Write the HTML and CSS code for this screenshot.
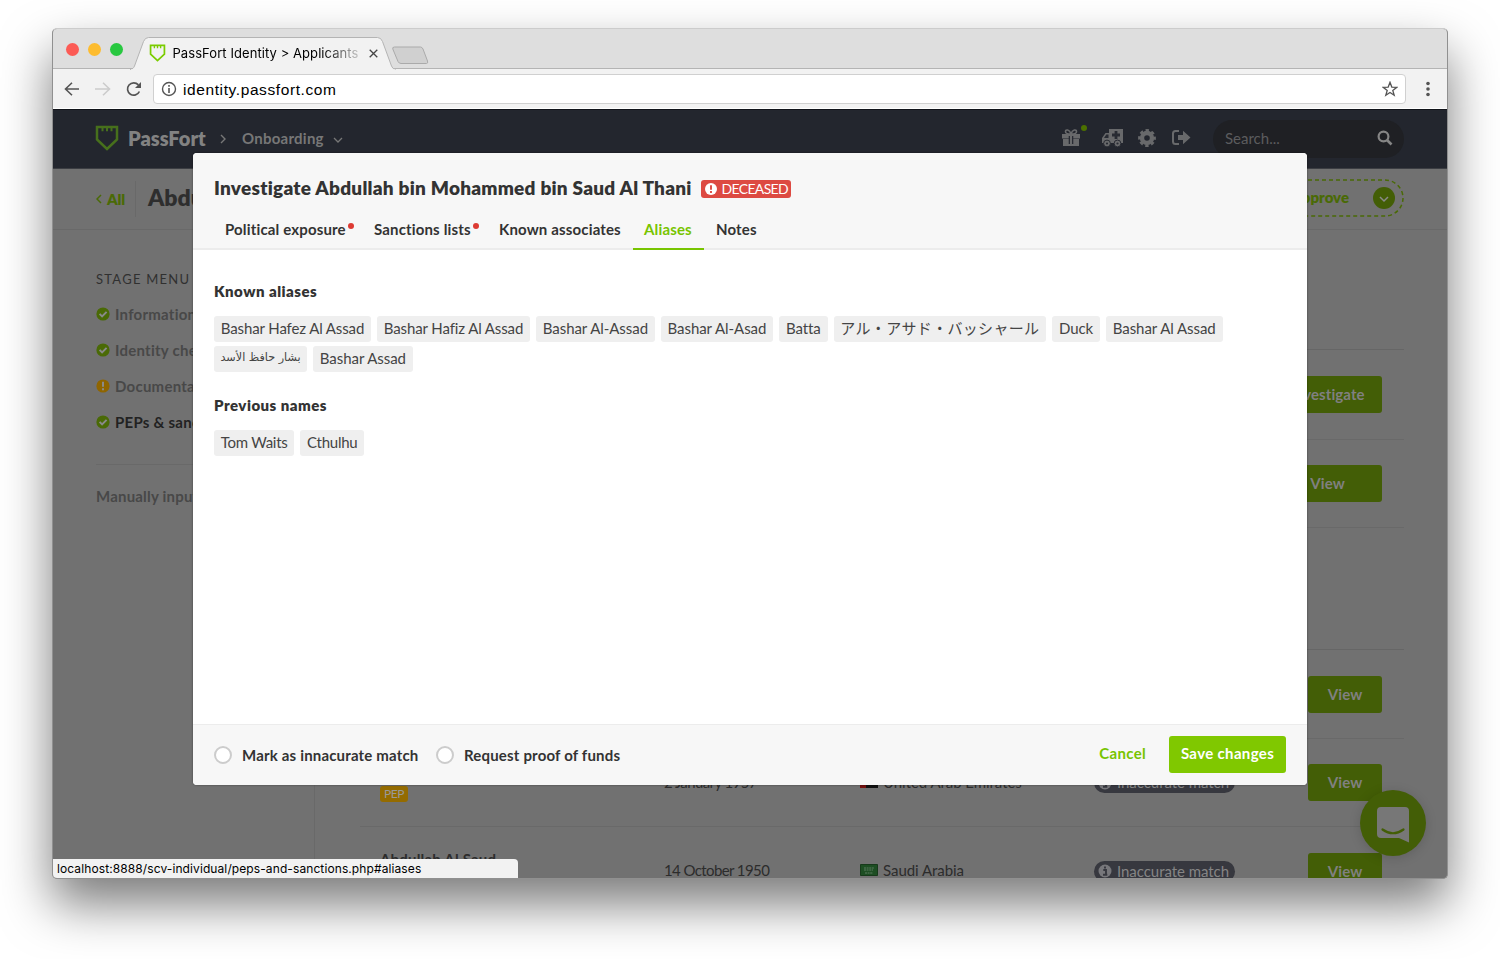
FILE: index.html
```html
<!DOCTYPE html>
<html lang="en">
<head>
<meta charset="utf-8">
<title>PassFort Identity &gt; Applicants</title>
<link rel="stylesheet" href="styles.css">
</head>
<body>
<svg class="defs" width="0" height="0" aria-hidden="true">
  <symbol id="shield" viewBox="0 0 24 26"><path d="M2 2v12.500L12 24l10-9.500V2H2Z" fill="none" stroke="currentColor" stroke-width="2.500"/><path d="M7.500 2v4.200M12 2v4.200M16.500 2v4.200" stroke="currentColor" stroke-width="2"/></symbol>
  <symbol id="check" viewBox="0 0 14 14"><circle cx="7" cy="7" r="6.600" fill="#4a6a06"/><path d="m3.600 6.900 2.500 2.500 4.500-4.500" fill="none" stroke="#8a8a8a" stroke-width="2"/></symbol>
  <symbol id="info" viewBox="0 0 14 14"><circle cx="7" cy="7" r="6.500" fill="#77777b"/><path d="M7 2.500v2M5.300 6H8v4.500M5 10.700h4.300" fill="none" stroke="#37383f" stroke-width="1.900"/></symbol>
</svg>
<div class="window">
  <header class="tabstrip">
    <i class="light red"></i><i class="light amber"></i><i class="light green"></i>
    <div class="tab">
      <svg class="tab-shape" width="266" height="33" viewBox="0 0 266 33"><path d="M0 32.500C3 32 3.500 31 4.500 29L13.500 4.500q1.500-4 5-4h229q3.500 0 5 4l9 24.500q1 3 4 3.500" fill="#f2f2f2" stroke="#b4b4b4"/><path d="M1 33h264" stroke="#f2f2f2" stroke-width="1.500"/></svg>
      <svg class="tab-icon" width="17" height="18"><use href="#shield"/></svg>
      <span class="tab-title">PassFort Identity &gt; Applicants</span>
      <svg class="tab-close" width="9" height="9"><path d="m.7.7 7.600 7.600M8.300.7.7 8.300" stroke="#444" stroke-width="1.300"/></svg>
    </div>
    <svg class="newtab" width="38" height="19"><path d="M3.500 1h26q1.500 0 2.500 2l4.500 12q.8 2.500-1 2.500H10q-2 0-3-2L1.800 3Q1.200 1 3.500 1Z" fill="#d0d0d0" stroke="#aaa"/></svg>
  </header>
  <div class="toolbar">
    <svg width="16" height="14"><path d="M15 7H1.500M8 .7 1.500 7 8 13.300" fill="none" stroke="#555" stroke-width="1.600"/></svg>
    <svg width="16" height="14"><path d="M0 7h13.500M8 .7 14.500 7 8 13.300" fill="none" stroke="#ccc" stroke-width="1.600"/></svg>
    <svg width="16" height="16"><path d="M13.400 10.500a6.200 6.200 0 1 1-1-6.600" fill="none" stroke="#555" stroke-width="1.700"/><path d="M15 1v6H9Z" fill="#555"/></svg>
    <div class="address">
      <svg width="16" height="16"><circle cx="8" cy="8" r="6.500" fill="none" stroke="#555" stroke-width="1.400"/><path d="M8 4v1.700M8 7v5" stroke="#555" stroke-width="1.600"/></svg>
      <span class="url">identity.passfort.com</span>
      <svg class="star" width="16" height="16"><path d="m8 1.300 1.800 4.800 5 .2-4 3.100 1.400 4.900L8 11.500l-4.200 2.800 1.400-4.900-4-3.100 5-.2Z" fill="none" stroke="#555" stroke-width="1.300"/></svg>
    </div>
    <svg class="dots" width="4" height="16" fill="#555"><circle cx="2" cy="2.500" r="1.800"/><circle cx="2" cy="8" r="1.800"/><circle cx="2" cy="13.500" r="1.800"/></svg>
  </div>
  <nav class="nav">
    <svg class="brand-icon" width="24" height="26"><use href="#shield"/></svg>
    <span class="brand">PassFort</span>
    <svg class="crumb" width="6" height="10"><path d="m1 1 4 4-4 4" fill="none" stroke="#777" stroke-width="1.400"/></svg>
    <span class="section">Onboarding</span>
    <svg width="10" height="7"><path d="m1 1 4 4 4-4" fill="none" stroke="#777" stroke-width="1.300"/></svg>
    <div class="nav-icons">
      <span class="gift"><svg width="18" height="17" fill="#68696b"><path d="M0 5h18v4.500H0ZM1 10h16v7H1Z"/><path d="M9 5C6 5 3.500 4.500 3.500 2.700 3.500 0 7.500.3 9 5 10.500.3 14.500 0 14.500 2.700 14.500 4.500 12 5 9 5Z" fill="none" stroke="#68696b" stroke-width="1.600"/><path d="M6.700 7h4.600V15H6.700Z" fill="#282b33"/><path d="M8 6h2v9H8Z"/></svg><i></i></span>
      <svg width="21" height="18" fill="#68696b"><path d="M7 0h14v14H0V9l3.500-5H7Z"/><circle cx="5" cy="14.500" r="3.400" stroke="#282b33"/><circle cx="15.500" cy="14.500" r="3.400" stroke="#282b33"/><path d="M2 9h4.500V5.500H4.300ZM12.600 2h2.800v2.600H18v2.800h-2.600V10h-2.800V7.400H10V4.600h2.600Z" fill="#282b33"/><circle cx="5" cy="14.500" r="1.100" fill="#282b33"/><circle cx="15.500" cy="14.500" r="1.100" fill="#282b33"/></svg>
      <svg width="18" height="18"><circle cx="9" cy="9" r="5" fill="none" stroke="#68696b" stroke-width="4.400"/><circle cx="9" cy="9" r="7.700" fill="none" stroke="#68696b" stroke-width="2.400" stroke-dasharray="3.400 2.647" stroke-dashoffset="1.700"/></svg>
      <svg width="19" height="15"><path d="M7 1H3.500Q1 1 1 3.500v8Q1 14 3.500 14H7" fill="none" stroke="#68696b" stroke-width="2"/><path d="M6 5h5V.8l7.500 6.700-7.500 6.700V10H6Z" fill="#68696b"/></svg>
    </div>
    <div class="search"><span>Search...</span><svg width="16" height="16"><circle cx="6.500" cy="6.500" r="4.900" fill="none" stroke="#858585" stroke-width="2.200"/><path d="m10 10 4.500 4.500" stroke="#858585" stroke-width="2.600"/></svg></div>
  </nav>
  <div class="subheader">
    <svg width="6" height="10"><path d="M5 1 1 5l4 4" fill="none" stroke="#4a6a06" stroke-width="1.500"/></svg>
    <span class="all">All</span>
    <h1>Abdullah</h1>
    <div class="approve"><svg class="approve-line" width="150" height="38"><rect x="1" y="1" width="148" height="36" rx="18" fill="none" stroke="#4a6a06" stroke-width="1.500" stroke-dasharray="4 3"/></svg><span>Approve</span><svg width="22" height="22"><circle cx="11" cy="11" r="11" fill="#435e06"/><path d="m7 10 4 4 4-4" fill="none" stroke="#8a8a8a" stroke-width="1.500"/></svg></div>
  </div>
  <div class="content">
    <aside>
      <h2>STAGE MENU</h2>
      <ul>
        <li><svg width="14" height="14"><use href="#check"/></svg>Information</li>
        <li><svg width="14" height="14"><use href="#check"/></svg>Identity checks</li>
        <li><svg width="14" height="14"><circle cx="7" cy="7" r="6.600" fill="#8f6500"/><path d="M7 2.700v5M7 9.200v2" stroke="#8a8a8a" stroke-width="2"/></svg>Documentation</li>
        <li class="current"><svg width="14" height="14"><use href="#check"/></svg>PEPs &amp; sanctions</li>
      </ul>
      <p>Manually input</p>
    </aside>
    <main>
      <section class="table first">
        <div class="row"><span class="btn wide">Investigate</span></div>
        <div class="row"><span class="btn wide">View</span></div>
      </section>
      <section class="table">
        <div class="row"><span class="btn">View</span></div>
        <div class="row">
          <div class="who"><b>Abdullah</b><em>PEP</em></div>
          <span class="date">2 January 1957</span>
          <span class="country"><svg width="18" height="12"><path d="M0 0h18v4H0Z" fill="#174a22"/><path d="M0 4h18v4H0Z" fill="#858585"/><path d="M0 8h18v4H0Z" fill="#111"/><path d="M0 0h6v12H0Z" fill="#74100e"/></svg>United Arab Emirates</span>
          <span class="status"><svg width="14" height="14"><use href="#info"/></svg>Inaccurate match</span>
          <span class="btn">View</span>
        </div>
        <div class="row">
          <div class="who raised"><b>Abdullah Al Saud</b></div>
          <span class="date">14 October 1950</span>
          <span class="country"><svg width="18" height="12"><path d="M.5.5h17v11H.5Z" fill="#1d4e23" stroke="#173a1b"/><path d="M4 4h10M4 6h9M5 9h8" stroke="#5d7b60" stroke-width="1.200" stroke-dasharray="2 .6"/></svg>Saudi Arabia</span>
          <span class="status"><svg width="14" height="14"><use href="#info"/></svg>Inaccurate match</span>
          <span class="btn">View</span>
        </div>
      </section>
    </main>
  </div>
  <div class="chat"><svg width="32" height="36"><path d="M4 0h24q4 0 4 4v31.500L22 31H4q-4 0-4-4V4q0-4 4-4Z" fill="#777"/><path d="M5.500 22.500q10.500 7.500 21 0" fill="none" stroke="#435e06" stroke-width="2.200" stroke-linecap="round"/></svg></div>
  <div class="statusbar">localhost:8888/scv-individual/peps-and-sanctions.php#aliases</div>
  <div class="modal">
    <div class="modal-head">
      <div class="title"><h3>Investigate Abdullah bin Mohammed bin Saud Al Thani</h3><span class="deceased"><svg width="12" height="12"><circle cx="6" cy="6" r="6" fill="#fff"/><path d="M6 2.300v4.500M6 8v1.900" stroke="#dd4a42" stroke-width="1.900"/></svg><span>DECEASED</span></span></div>
      <div class="tabs"><a class="alert t1">Political exposure</a><a class="alert t2">Sanctions lists</a><a class="t3">Known associates</a><a class="active">Aliases</a><a>Notes</a></div>
    </div>
    <div class="modal-body">
      <h4>Known aliases</h4>
      <div class="chips known"><span>Bashar Hafez Al Assad</span><span>Bashar Hafiz Al Assad</span><span>Bashar Al-Assad</span><span>Bashar Al-Asad</span><span>Batta</span><span class="ja" lang="ja">アル・アサド・バッシャール</span><span>Duck</span><span>Bashar Al Assad</span><span class="ar" lang="ar" dir="rtl">بشار حافظ الأسد</span><span>Bashar Assad</span></div>
      <h4>Previous names</h4>
      <div class="chips previous"><span>Tom Waits</span><span>Cthulhu</span></div>
    </div>
    <div class="modal-foot">
      <i class="radio"></i><label class="mark">Mark as innacurate match</label>
      <i class="radio"></i><label class="proof">Request proof of funds</label>
      <span class="cancel">Cancel</span><span class="save">Save changes</span>
    </div>
  </div>
</div>
</body>
</html>
```
FILE: styles.css
```css
* { box-sizing: border-box; }
body { margin: 0; width: 1500px; height: 959px; overflow: hidden; padding: 28px 0 0 52px; background: #fff; font-family: Lato, "Noto Sans CJK JP", sans-serif; font-size: 15px; }
svg { display: block; flex: none; }
.defs { position: absolute; }
h1, h2, h3, h4, p, ul { margin: 0; padding: 0; list-style: none; }
.window { position: relative; display: flex; flex-direction: column; width: 1396px; height: 851px; overflow: hidden; border: 1px solid #909090; border-top-color: #ccc; border-radius: 5px; background: #717171; box-shadow: 0 25px 50px rgba(0,0,0,.52); }

.tabstrip { display: flex; height: 40px; flex: none; background: #dedede; border-bottom: 1px solid #b4b4b4; }
.light { width: 13px; height: 13px; border-radius: 50%; margin: 14px 9px 0 0; }
.light.red { background: #fc5b55; margin-left: 12.5px; }
.light.amber { background: #fdbc2f; }
.light.green { background: #28c840; margin-right: 8px; }
.tab { position: relative; display: flex; align-items: center; width: 266px; height: 33px; margin: 7px 0 0 -.5px; padding-left: 18.500px; flex: none; }
.tab-shape { position: absolute; left: 0; top: 1px; }
.tab-icon { position: relative; color: #7bcc00; }
.tab-title { position: relative; margin: 1px 9px 0 7px; width: 187px; font: 13px Inter, sans-serif; letter-spacing: .07px; white-space: nowrap; overflow: hidden; color: transparent; background: linear-gradient(90deg, #000 80%, #ccc 100%); background-clip: text; -webkit-background-clip: text; }
.tab-close { position: relative; top: 1px; }
.newtab { margin: 17px 0 0 -5px; }

.toolbar { display: flex; align-items: center; height: 40px; flex: none; padding: 0 17px 0 11px; background: #f2f2f2; border-bottom: 1px solid #fff; }
.toolbar > svg + svg { margin-left: 15px; }
.address { display: flex; align-items: center; flex: 1; height: 30px; margin: 0 20px 0 11px; padding: 0 7px; border: 1px solid #d0d0d0; border-radius: 4px; background: #fff; }
.url { margin: 2px 0 0 6px; flex: 1; font: 15.5px "Liberation Sans", sans-serif; letter-spacing: .6px; color: #000; }

.nav { display: flex; align-items: center; height: 60px; flex: none; padding: 0 0 2px 42px; background: #23262e; border-top: 1px solid #101319; border-bottom: 1px solid #3c3e43; color: #777; }
.brand-icon { color: #47701c; }
.brand { width: 79px; margin: -1px 0 0 9px; font-size: 20px; font-weight: 800; color: #828282; }
.crumb { margin: 2px 16px 0 13px; }
.section { width: 82px; margin-right: 9px; font-weight: 700; letter-spacing: .25px; white-space: nowrap; }
.section + svg { margin-top: 4px; }
.nav-icons { display: flex; align-items: center; gap: 15px; margin: -1px 0 0 auto; }
.gift { position: relative; margin-right: 7px; }
.gift i { position: absolute; left: 19px; top: -4px; width: 6px; height: 6px; border-radius: 50%; background: #4c7100; }
.nav-icons > svg:nth-child(3) { margin-right: 1px; }
.search { display: flex; align-items: center; justify-content: space-between; width: 191px; height: 38px; margin: 1px 43px 0 22px; padding: 0 11px 1px 12px; border-radius: 19px; background: #1f2024; color: #5c5c5e; }

.subheader { display: flex; align-items: center; height: 61px; flex: none; padding: 0 43px; border-bottom: 1px solid #696969; }
.all { margin: 0 10px 0 5px; font-weight: 800; color: #4a6a06; letter-spacing: -.2px; }
h1 { padding-left: 12px; border-left: 1px solid #696969; height: 36px; line-height: 33px; font-size: 23px; font-weight: 800; color: #2e2e2e; }
.approve { position: relative; display: flex; align-items: center; justify-content: flex-end; width: 150px; height: 38px; margin: -2px 0 0 auto; padding-right: 9px; gap: 24px; color: #4a6a06; font-weight: 800; }
.approve span { margin-top: -2px; }
.approve-line { position: absolute; left: 0; top: 0; }

.content { display: flex; flex: 1; min-height: 0; }
aside { width: 262px; padding: 40px 0 0 43px; border-right: 1px solid #696969; flex: none; color: #484848; font-weight: 700; white-space: nowrap; }
h2 { height: 18px; font-size: 13px; font-weight: 400; line-height: 18px; letter-spacing: 1.250px; color: #303030; }
aside ul { padding: 8px 0 24px; border-bottom: 1px solid #696969; }
li { display: flex; align-items: center; gap: 5px; height: 36px; letter-spacing: .25px; }
.current { color: #222; }
aside p { margin-top: 22px; letter-spacing: .2px; }
main { width: 1089px; padding: 119px 0 0 45px; flex: none; }
.table { border-top: 1px solid #666; }
.table.first { margin-bottom: 121px; }
.row { display: flex; align-items: center; height: 89px; padding: 0 22px 0 20px; border-bottom: 1px solid #696969; color: #2c2c2c; white-space: nowrap; }
.row:nth-child(2) { height: 88px; }
.first .row:first-child { height: 90px; padding-bottom: 1px; }
.btn { width: 74px; height: 37px; margin-left: auto; border-radius: 3px; background: #435e06; color: #808080; font-weight: 700; line-height: 36px; text-align: center; letter-spacing: .1px; }
.btn.wide { width: 109px; }
.who { display: flex; flex-direction: column; align-items: flex-start; gap: 5px; width: 284px; letter-spacing: .2px; }
.raised { padding-bottom: 25px; }
em { padding: 0 4px; border-radius: 3px; background: #946b00; color: #999; font: 12px/16px Lato, sans-serif; letter-spacing: -.4px; }
.date { width: 196px; letter-spacing: -.6px; }
.country { display: flex; align-items: center; gap: 5px; width: 234px; letter-spacing: -.05px; }
.date, .country { margin-top: -2px; }
.status { display: flex; align-items: center; gap: 5px; width: 141px; height: 21px; padding-left: 4px; border-radius: 11px; background: #37383f; color: #858585; letter-spacing: -.05px; line-height: 19px; }
.chat { position: absolute; left: 1307px; top: 761px; display: flex; justify-content: center; padding-top: 17px; width: 66px; height: 66px; border-radius: 50%; background: #435e06; box-shadow: 0 2px 12px rgba(0,0,0,.15); }
.statusbar { position: absolute; left: 0; bottom: 0; width: 465px; height: 19px; padding-left: 4px; border-radius: 0 4px 0 0; background: #f2f2f2; font: 12px/19px Inter, sans-serif; letter-spacing: .1px; color: #000; }

.modal { position: absolute; left: 140px; top: 124px; display: flex; flex-direction: column; width: 1114px; height: 632px; border-radius: 4px; overflow: hidden; background: #fff; color: #333; box-shadow: 0 0 2px rgba(0,0,0,.5); }
.modal-head { height: 97px; padding: 24px 21px 0; background: #f7f7f7; border-bottom: 2px solid #ececec; flex: none; }
.title { display: flex; align-items: center; height: 23px; }
h3 { width: 486.5px; font-size: 19px; font-weight: 800; white-space: nowrap; letter-spacing: .24px; line-height: 22px; margin-top: -1px; }
.deceased { display: flex; align-items: center; width: 90px; height: 18px; padding-left: 4px; gap: 5px; border-radius: 3px; background: #dd4a42; color: #fff; font-size: 14px; letter-spacing: -.65px; line-height: 17px; }
.tabs { display: grid; grid-template-columns: 149px 125px 145px 71px 64px; grid-template-rows: 50px; height: 50px; font-weight: 700; line-height: 59px; letter-spacing: .15px; white-space: nowrap; }
.tabs a { padding-left: 11px; }
.tabs .active { color: #78c400; border-bottom: 2px solid #78c400; }
.tabs a:last-child { padding-left: 12px; }
.alert::after { content: ""; display: inline-block; width: 6px; height: 6px; margin-left: 2px; border-radius: 50%; background: #dd3b33; vertical-align: 6px; }
.modal-body { flex: 1; padding: 31px 21px; }
h4 { font-size: 15px; font-weight: 800; line-height: 20px; height: 20px; letter-spacing: .48px; }
.chips { display: flex; flex-wrap: wrap; gap: 4px 6px; margin: 15px 0 23px; }
.chips span { height: 26px; padding: 0 6.800px; border-radius: 3px; background: #efefef; line-height: 24px; letter-spacing: -.12px; color: #444; white-space: nowrap; }
.known span:nth-child(n+3) { letter-spacing: -.06px; }
.chips .ar { font-family: "DejaVu Sans", sans-serif; font-size: 11.200px; letter-spacing: 0 !important; padding: 0 6.500px; }
.chips .ja { font-family: "Noto Sans CJK JP", sans-serif; letter-spacing: .32px !important; }
.previous span { letter-spacing: -.27px; }
.modal-foot { display: flex; align-items: center; height: 61px; padding: 0 21px; background: #f7f7f7; border-top: 1px solid #ececec; font-weight: 700; white-space: nowrap; flex: none; letter-spacing: .18px; }
.radio { width: 18px; height: 18px; margin-right: 10px; border: 2px solid #ccc; border-radius: 50%; background: #fff; }
.mark { width: 194px; }
.cancel { margin: -4px 23px 0 auto; color: #78c400; letter-spacing: .3px; }
.save { width: 117px; height: 37px; margin-top: -1px; border-radius: 3px; background: #80c800; color: #fff; text-align: center; line-height: 35px; letter-spacing: .35px; }
```
